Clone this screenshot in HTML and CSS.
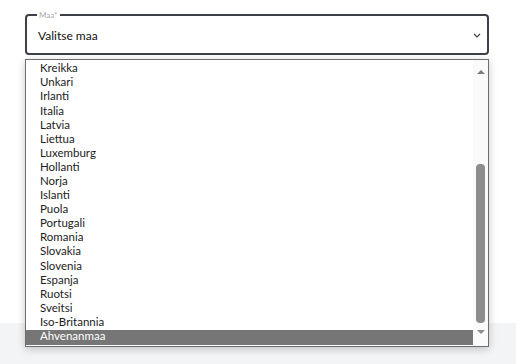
FILE: index.html
```html
<!doctype html>
<html lang="fi">
<head>
  <meta charset="utf-8">
  <title>Maa</title>
  <link rel="stylesheet" href="styles.css">
</head>
<body>
  <div class="form">
    <fieldset class="field">
      <legend>Maa*</legend>
      <span class="value">Valitse maa</span>
      <svg class="chevron" width="8" height="5" viewBox="0 0 8 5">
        <path d="M1 1l3 3 3-3" fill="none" stroke="#3d4250" stroke-width="1.2"/>
      </svg>
    </fieldset>

    <div class="dropdown">
      <ul class="options">
        <li>Ranska</li>
        <li>Kreikka</li>
        <li>Unkari</li>
        <li>Irlanti</li>
        <li>Italia</li>
        <li>Latvia</li>
        <li>Liettua</li>
        <li>Luxemburg</li>
        <li>Hollanti</li>
        <li>Norja</li>
        <li>Islanti</li>
        <li>Puola</li>
        <li>Portugali</li>
        <li>Romania</li>
        <li>Slovakia</li>
        <li>Slovenia</li>
        <li>Espanja</li>
        <li>Ruotsi</li>
        <li>Sveitsi</li>
        <li>Iso-Britannia</li>
        <li class="selected">Ahvenanmaa</li>
      </ul>
      <div class="scrollbar">
        <span class="arrow up"></span>
        <div class="track"><span class="thumb"></span></div>
        <span class="arrow down"></span>
      </div>
    </div>
  </div>
  <div class="band"></div>
</body>
</html>
```

FILE: styles.css
```css
body {
  margin: 0;
  min-height: 100vh;
  display: flex;
  flex-direction: column;
  font-family: Lato, "Open Sans", sans-serif;
  color: #222;
  background: #fff;
}

.form {
  position: relative;
  height: 323px;
  padding: 10px 27px 0 25px;
  box-sizing: border-box;
}

.band {
  flex: 1;
  background-color: #f3f4f6;
}

/* select field */
.field {
  margin: 0;
  height: 45px;
  box-sizing: border-box;
  border: 2px solid #3d4047;
  border-radius: 4px;
  padding: 0 6px 0 11px;
  display: flex;
  align-items: center;
  justify-content: space-between;
}

.field legend {
  font-size: 8px;
  color: #aaa;
  padding: 0 2px;
  margin-left: -1px;
  line-height: 10px;
}

.value {
  font-size: 12px;
  color: #111;
  margin-top: -2px;
}

.chevron {
  margin-top: -2px;
}

/* open list */
.dropdown {
  position: absolute;
  top: 59px;
  left: 25px;
  width: 464px;
  height: 288px;
  box-sizing: border-box;
  border: 1px solid #6e6e6e;
  background: #fff;
  box-shadow: 0 2px 8px rgb(0 0 0 / 0.22);
  display: flex;
}

.options {
  flex: 1;
  margin: 0 0 1px;
  padding: 0;
  list-style: none;
  overflow: hidden;
  display: flex;
  flex-direction: column;
  justify-content: flex-end;
}

.options li {
  flex: none;
  height: 14.1px;
  line-height: 11px;
  padding-left: 14px;
  font-size: 11.5px;
}

.options li.selected {
  background-color: #767676;
  color: #fff;
  height: 15px;
  line-height: 12px;
}

.scrollbar {
  width: 15px;
  background-color: #fafafa;
  display: flex;
  flex-direction: column;
  align-items: center;
}

.arrow {
  width: 0;
  height: 0;
  border-left: 4px solid transparent;
  border-right: 4px solid transparent;
}

.arrow.up {
  margin: 10px 0 7px;
  border-bottom: 4px solid #7d7d7d;
}

.arrow.down {
  margin: 7px 0 12px;
  border-top: 4px solid #8a8a8a;
}

.track {
  flex: 1;
  display: flex;
  flex-direction: column;
  justify-content: flex-end;
}

.thumb {
  width: 9px;
  height: 159px;
  border-radius: 4px;
  background-color: #8d8d8d;
}
```
